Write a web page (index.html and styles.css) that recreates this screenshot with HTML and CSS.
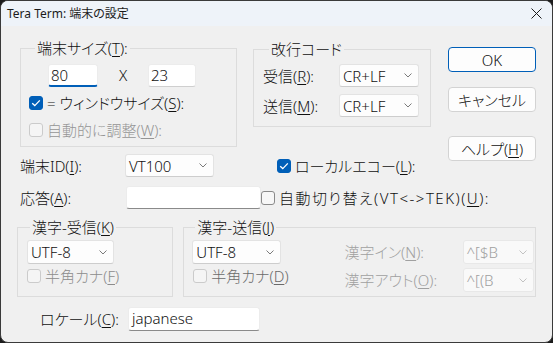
FILE: index.html
```html
<!DOCTYPE html>
<html lang="ja">
<head>
  <meta charset="UTF-8" />
  <meta name="viewport" content="width=device-width, initial-scale=1.0" />
  <link rel="stylesheet" href="styles.css">
</head>
<body>

  <div class="window">
    <div class="titlebar">
      <span>Tera Term: 端末の設定</span>
      <svg width="11" height="11" viewBox="0 0 11 11"><path d="M0.5 0.5 L10.5 10.5 M10.5 0.5 L0.5 10.5" stroke="#1b1b1b" stroke-width="1" fill="none"/></svg>
    </div>

    <div class="dialog">
      <div class="top">
        <div class="main">
          <div class="groups">
            <fieldset class="group size-group">
              <legend>端末サイズ(<u>T</u>):</legend>
              <div class="size-row">
                <div class="field size-field focused">80</div>
                <span class="times">X</span>
                <div class="field size-field">23</div>
              </div>
              <div class="check on">
                <span class="box"><svg width="10" height="8" viewBox="0 0 10 8"><path d="M1.2 4.2 L3.8 6.6 L8.8 1.4" fill="none" stroke="#fff" stroke-width="1.3"/></svg></span>
                <span>= ウィンドウサイズ(<u>S</u>):</span>
              </div>
              <div class="check disabled second">
                <span class="box"></span>
                <span>自動的に調整(<u>W</u>):</span>
              </div>
            </fieldset>

            <fieldset class="group crlf-group">
              <legend>改行コード</legend>
              <div class="crlf-row">
                <span class="crlf-label">受信(<u>R</u>):</span>
                <div class="combo crlf-combo">CR+LF<svg width="8" height="5" viewBox="0 0 8 5"><path d="M0.5 0.5 L4 4 L7.5 0.5" fill="none" stroke="#7a7a7a" stroke-width="1"/></svg></div>
              </div>
              <div class="crlf-row second">
                <span class="crlf-label">送信(<u>M</u>):</span>
                <div class="combo crlf-combo">CR+LF<svg width="8" height="5" viewBox="0 0 8 5"><path d="M0.5 0.5 L4 4 L7.5 0.5" fill="none" stroke="#7a7a7a" stroke-width="1"/></svg></div>
              </div>
            </fieldset>
          </div>

          <div class="line line-id">
            <div class="cell">
              <span class="line-label">端末ID(<u>I</u>):</span>
              <div class="combo id-combo">VT100<svg width="8" height="5" viewBox="0 0 8 5"><path d="M0.5 0.5 L4 4 L7.5 0.5" fill="none" stroke="#7a7a7a" stroke-width="1"/></svg></div>
            </div>
            <div class="check on">
              <span class="box"><svg width="10" height="8" viewBox="0 0 10 8"><path d="M1.2 4.2 L3.8 6.6 L8.8 1.4" fill="none" stroke="#fff" stroke-width="1.3"/></svg></span>
              <span>ローカルエコー(<u>L</u>):</span>
            </div>
          </div>

          <div class="line line-answer">
            <div class="cell">
              <span class="line-label">応答(<u>A</u>):</span>
              <div class="field answer-field"></div>
            </div>
            <div class="check">
              <span class="box"></span>
              <span class="wide">自動切り替え(VT&lt;-&gt;TEK)(<u>U</u>):</span>
            </div>
          </div>
        </div>

        <div class="buttons">
          <div class="btn default">OK</div>
          <div class="btn cancel">キャンセル</div>
          <div class="btn help">ヘルプ(<u>H</u>)</div>
        </div>
      </div>

      <div class="kanji">
        <fieldset class="group kanji-recv">
          <legend>漢字-受信(<u>K</u>)</legend>
          <div class="combo kanji-combo">UTF-8<svg width="8" height="5" viewBox="0 0 8 5"><path d="M0.5 0.5 L4 4 L7.5 0.5" fill="none" stroke="#7a7a7a" stroke-width="1"/></svg></div>
          <div class="check kana recv-kana">
            <span class="box"></span>
            <span>半角カナ(<u>F</u>)</span>
          </div>
        </fieldset>

        <fieldset class="group kanji-send">
          <legend>漢字-送信(<u>J</u>)</legend>
          <div class="send-body">
            <div class="send-left">
              <div class="combo send-combo">UTF-8<svg width="8" height="5" viewBox="0 0 8 5"><path d="M0.5 0.5 L4 4 L7.5 0.5" fill="none" stroke="#7a7a7a" stroke-width="1"/></svg></div>
              <div class="check kana send-kana">
                <span class="box"></span>
                <span>半角カナ(<u>D</u>)</span>
              </div>
            </div>
            <div class="send-grid">
              <span class="muted">漢字イン(<u>N</u>):</span>
              <div class="combo off">^[$B<svg width="8" height="5" viewBox="0 0 8 5"><path d="M0.5 0.5 L4 4 L7.5 0.5" fill="none" stroke="#c2c2c2" stroke-width="1"/></svg></div>
              <span class="muted">漢字アウト(<u>O</u>):</span>
              <div class="combo off">^[(B<svg width="8" height="5" viewBox="0 0 8 5"><path d="M0.5 0.5 L4 4 L7.5 0.5" fill="none" stroke="#c2c2c2" stroke-width="1"/></svg></div>
            </div>
          </div>
        </fieldset>
      </div>

      <div class="locale">
        <span class="locale-label">ロケール(<u>C</u>):</span>
        <div class="field locale-field">japanese</div>
      </div>
    </div>
  </div>

</body>
</html>
```

FILE: styles.css
```css
* {
  box-sizing: border-box;
}

body {
  margin: 0;
  background: #1c1c1c;
  color: #111;
  font-family: "Noto Sans", "Noto Sans CJK JP", sans-serif;
  font-size: 15px;
  font-weight: 300;
  line-height: 20px;
  font-feature-settings: "palt";
}

u {
  text-decoration-thickness: 1px;
  text-underline-offset: 2px;
}

.window {
  width: 553px;
  height: 343px;
  background: #f0f0f0;
  border: 1px solid #3a3a3a;
  border-radius: 8px;
  overflow: hidden;
  display: flex;
  flex-direction: column;
}

.titlebar {
  height: 25px;
  flex-shrink: 0;
  background: #eef3f9;
  display: flex;
  align-items: center;
  justify-content: space-between;
  padding: 0 10px 0 6px;
  font-size: 12px;
  font-weight: 400;
  color: #1b1b1b;
}

.dialog {
  flex: 1;
  padding: 12px 16px 0 16px;
}

.top {
  display: flex;
}

.main {
  width: 428px;
  margin-left: 3px;
}

.groups {
  display: flex;
  align-items: flex-start;
  gap: 16px;
}

/* group boxes */
.group {
  margin: 0;
  padding: 0;
  min-inline-size: 0;
  border: 1px solid #dcdcdc;
}

.group legend {
  margin-left: 6px;
  padding: 0 2px;
  line-height: 20px;
}

.size-group {
  width: 217px;
  height: 109px;
  padding: 6px 0 0 8px;
}

.size-row {
  display: flex;
  margin-left: 19px;
}

.times {
  width: 50px;
  text-align: center;
  line-height: 23px;
}

.crlf-group {
  width: 178px;
  height: 88px;
  margin-top: 1px;
  padding: 5px 0 0 9px;
}

.crlf-row {
  display: flex;
  align-items: center;
}

.crlf-row.second {
  margin-top: 7px;
}

.crlf-label {
  width: 76px;
}

/* inputs */
.field {
  height: 23px;
  background: #fff;
  border: 1px solid #ececec;
  border-bottom-color: #8a8a8a;
  border-radius: 3px;
  padding-left: 2px;
  line-height: 21px;
}

.size-field {
  width: 50px;
  border-bottom-color: #cfcfcf;
}

.size-field + .times + .size-field {
  width: 48px;
}

.size-field.focused {
  border-bottom: 2px solid #005fb8;
}

.combo {
  height: 23px;
  display: flex;
  align-items: center;
  justify-content: space-between;
  padding: 0 6px 0 3px;
  background: #fdfdfd;
  border: 1px solid #e3e3e3;
  border-bottom-color: #cdcdcd;
  border-radius: 3px;
}

.combo.off {
  background: #f9f9f9;
  border-color: #e8e8e8;
  color: #a0a0a0;
  height: 24px;
}

.crlf-combo {
  width: 80px;
}

.id-combo {
  width: 89px;
}

.kanji-combo {
  width: 87px;
  height: 24px;
}

.send-combo {
  width: 89px;
  height: 24px;
}

/* checkboxes */
.check {
  display: flex;
  align-items: center;
  height: 20px;
  white-space: nowrap;
}

.wide {
  letter-spacing: 1.5px;
}

.size-group .check {
  margin-top: 6px;
}

.size-group .check.second {
  margin-top: 7px;
}

.box {
  width: 14px;
  height: 14px;
  flex-shrink: 0;
  margin-right: 4px;
  border: 1px solid #8a8a8a;
  border-radius: 3px;
  background: #f7f7f7;
  display: flex;
  align-items: center;
  justify-content: center;
}

.check.on .box {
  background: #005fb8;
  border-color: #005fb8;
}

.check.disabled {
  color: #959595;
}

.check.disabled .box {
  border-color: #cbcbcb;
  background: #f5f5f5;
}

/* lines under the groups */
.line {
  display: flex;
  align-items: center;
  height: 23px;
}

.line-id {
  margin-top: 7px;
}

.line-answer {
  margin-top: 9px;
}

.cell {
  width: 257px;
  display: flex;
  align-items: center;
}

.line-label {
  width: 105px;
}

.answer-field {
  width: 135px;
  margin-left: 1px;
}

/* buttons */
.buttons {
  width: 88px;
  display: flex;
  flex-direction: column;
  padding-top: 9px;
}

.btn {
  height: 25px;
  display: flex;
  align-items: center;
  justify-content: center;
  background: #fdfdfd;
  border: 1px solid #d3d3d3;
  border-radius: 4px;
}

.btn.default {
  border-color: #005fb8;
}

.btn.cancel {
  margin-top: 15px;
}

.btn.help {
  margin-top: 24px;
}

/* kanji groups */
.kanji {
  display: flex;
  gap: 10px;
  margin-top: 8px;
}

.kanji .group legend {
  margin-left: 3px;
}

.kanji-recv {
  width: 159px;
  height: 80px;
  padding: 3px 0 0 9px;
}

.kanji .kana {
  margin-top: 2px;
}

.kanji .kana .box {
  border-color: #cbcbcb;
  background: #f5f5f5;
}

.recv-kana {
  color: #8c8c8c;
}

.send-kana {
  margin-left: 1px;
  color: #6a6a6a;
}

.kanji-send {
  width: 359px;
  height: 80px;
  padding: 3px 0 0 8px;
}

.send-body {
  display: flex;
}

.send-grid {
  display: grid;
  grid-template-columns: 118px 71px;
  grid-auto-rows: 24px;
  row-gap: 4px;
  align-items: center;
  margin-left: 56px;
}

.muted {
  color: #a0a0a0;
}

/* locale */
.locale {
  display: flex;
  align-items: center;
  margin: 10px 0 0 23px;
}

.locale-label {
  width: 88px;
}

.locale-field {
  width: 132px;
  height: 24px;
  padding-left: 3px;
}
```
